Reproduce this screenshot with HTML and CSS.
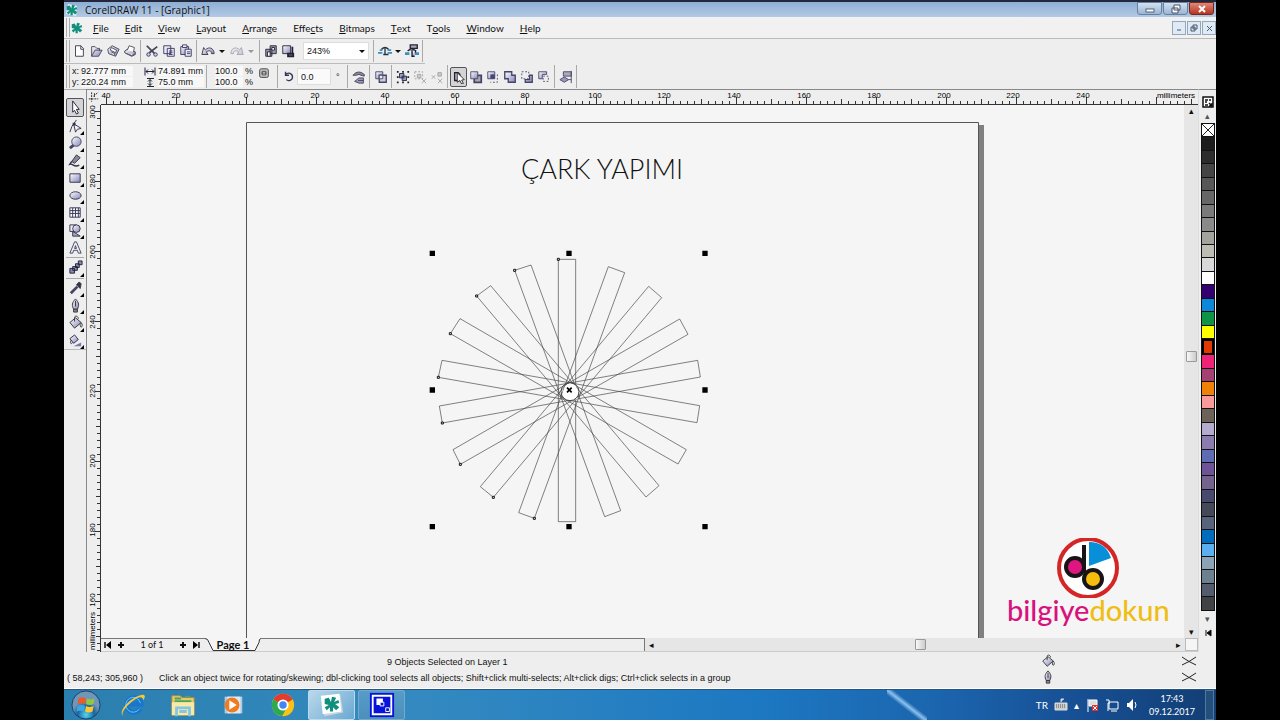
FILE: index.html
```
<!DOCTYPE html>
<html lang="en">
<head>
<meta charset="utf-8">
<title>CorelDRAW 11 - [Graphic1]</title>
<link rel="stylesheet" href="styles.css">
</head>
<body>
<svg class="defs" aria-hidden="true">
  <linearGradient id="lav" x1="0" y1="0" x2="1" y2="1"><stop offset="0" stop-color="#fff"/><stop offset="1" stop-color="#8585ba"/></linearGradient>
  <symbol id="corel" viewBox="0 0 16 16"><path d="M1 3l4-1 2 4 1-5 4 1-2 4 4-2 1 3-4 1 4 3-3 3-3-3v4H6v-4l-3 3-2-3 4-2-4-1z" fill="#108f7c"/></symbol>
  <symbol id="bucket" viewBox="0 0 16 16"><path d="M2 8l6-5 6 5-7 6z" fill="url(#lav)" stroke="#333"/><path d="M7 7V3c0-3 4-2 4 1M14 8c2 2 1 5 0 5s-1-3-1-4" fill="none" stroke="#333"/></symbol>
  <symbol id="pen" viewBox="0 0 16 16"><path d="M8 1c4 4 4 7 2 11H6C4 8 4 5 8 1z" fill="url(#lav)" stroke="#333"/><path d="M6 12h4v3H6zM8 3v6" fill="#888" stroke="#333"/></symbol>
  <symbol id="cross" viewBox="0 0 16 10"><path d="M1 1q7 5 14 8M15 1Q8 6 1 9" fill="none" stroke="#222"/></symbol>
</svg>
<div class="app">
  <header class="titlebar">
    <svg class="i14" viewBox="0 0 14 14"><path d="M3 1l9 2-1 10-10-2z" fill="#e8f3f4"/><svg x="1" y="1" width="12" height="12"><use href="#corel"/></svg></svg>
    <h1>CorelDRAW 11 - [Graphic1]</h1>
    <div class="winbtns">
      <button aria-label="Minimize"><svg viewBox="0 0 16 10"><rect x="4" y="5" width="8" height="3" fill="#fff" stroke="#56657d"/></svg></button>
      <button aria-label="Restore"><svg viewBox="0 0 16 10"><path d="M6 1h6v5h-6zM4 4h6v5H4z" fill="#fff" stroke="#44526b"/></svg></button>
      <button class="close" aria-label="Close"><svg viewBox="0 0 16 10"><path d="M5 2l6 6M11 2L5 8" stroke="#fff" stroke-width="2"/></svg></button>
    </div>
  </header>
  <nav class="menubar">
    <span class="grip"></span>
    <svg class="i12"><use href="#corel"/></svg>
    <div class="menus">
      <button><u>F</u>ile</button><button><u>E</u>dit</button><button><u>V</u>iew</button><button><u>L</u>ayout</button><button><u>A</u>rrange</button><button>Effe<u>c</u>ts</button><button><u>B</u>itmaps</button><button><u>T</u>ext</button><button>T<u>o</u>ols</button><button><u>W</u>indow</button><button><u>H</u>elp</button>
    </div>
    <div class="docbtns">
      <button aria-label="Minimize document"><svg viewBox="0 0 12 12"><path d="M4 8h4" stroke="#47576b"/></svg></button>
      <button aria-label="Restore document"><svg viewBox="0 0 12 12"><path d="M5 3h4v4H5zM3 5h4v4H3z" fill="#dce9f5" stroke="#47576b"/></svg></button>
      <button aria-label="Close document"><svg viewBox="0 0 12 12"><path d="M4 4l5 5M9 4L4 9" stroke="#47576b"/></svg></button>
    </div>
  </nav>
  <div class="toolbar">
    <div class="bar">
      <span class="grip"></span>
      <button aria-label="New"><svg viewBox="0 0 16 16"><path d="M4 2h6l3 3v9H4z" fill="#fff" stroke="#334"/><path d="M10 2v4h3" fill="none" stroke="#334"/></svg></button>
      <button aria-label="Open"><svg viewBox="0 0 16 16"><path d="M3 14V3h4l2 2h3v3M3 14l4-7h8l-4 7z" fill="url(#lav)" stroke="#445"/></svg></button>
      <button aria-label="Save"><svg viewBox="0 0 16 16"><path d="M2 6l5-4 8 4-4 8-8-3z" fill="url(#lav)" stroke="#445"/><path d="M6 4l6 3-1 3-6-3zM6 9l4 2-1 2" fill="#fff" stroke="#445"/></svg></button>
      <button aria-label="Print"><svg viewBox="0 0 16 16"><path d="M2 8l3-2 9 3v3l-4 2-8-4z" fill="url(#lav)" stroke="#334"/><path d="M5 7l2-5 6 2-1 5M4 11l6 2 3-2" fill="#fff" stroke="#445"/></svg></button>
      <span class="sep"></span>
      <button aria-label="Cut"><svg viewBox="0 0 16 16"><path d="M2 2l9 9M14 3L5 10" stroke="#445" stroke-width="2"/><circle cx="4" cy="12" r="2" fill="#ccd" stroke="#336"/><circle cx="12" cy="12" r="2" fill="#ccd" stroke="#336"/></svg></button>
      <button aria-label="Copy"><svg viewBox="0 0 16 16"><path d="M2 2h8v9H2zM6 5h8v9H6z" fill="#e8e8ff" stroke="#335"/><path d="M8 8h4M8 10h4M8 12h4" stroke="#335"/></svg></button>
      <button aria-label="Paste"><svg viewBox="0 0 16 16"><path d="M2 3h9v9H2z" fill="url(#lav)" stroke="#335"/><path d="M4 1h5v3H4zM7 6h7v8H7z" fill="#eef" stroke="#335"/><path d="M9 9h4M9 11h4" stroke="#335"/></svg></button>
      <span class="sep"></span>
      <button aria-label="Undo"><svg viewBox="0 0 16 16"><path d="M1 12l2-8 2 3c4-5 10-2 10 4h-3c0-4-3-4-6-2l2 3z" fill="url(#lav)" stroke="#334"/></svg></button>
      <button class="drop" aria-label="Undo list"></button>
      <button class="off" aria-label="Redo"><svg viewBox="0 0 16 16"><path d="M15 12l-2-8-2 3C7 2 1 5 1 11h3c0-4 3-4 6-2l-2 3z" fill="url(#lav)" stroke="#334"/></svg></button>
      <button class="drop off" aria-label="Redo list"></button>
      <span class="sep"></span>
      <button aria-label="Import"><svg viewBox="0 0 16 16"><path d="M7 2h7v9H7zM2 6h7v8H2z" fill="#99a" stroke="#223"/><path d="M9 4h3v3H9zM4 9h3v5H4z" fill="#fff" stroke="#223"/></svg></button>
      <button aria-label="Export"><svg viewBox="0 0 16 16"><path d="M2 2h9v9H2z" fill="url(#lav)" stroke="#223"/><path d="M8 11h6v3H8zM13 3v7" fill="#667" stroke="#223" stroke-width="2"/></svg></button>
      <label class="zoom"><select aria-label="Zoom level"><option>243%</option></select></label>
      <span class="sep"></span>
      <button aria-label="Launcher"><svg viewBox="0 0 16 16"><path d="M0 10h5M11 10h5M2 7h3M11 7h4" stroke="#3d8fc0" stroke-width="2"/><path d="M4 6q4-4 8 0M8 5v7h4M8 12H6" fill="none" stroke="#234" stroke-width="1.5"/></svg></button>
      <button class="drop small" aria-label="Launcher list"></button>
      <button aria-label="Community"><svg viewBox="0 0 16 16"><path d="M0 11h5M11 11h5" stroke="#3d8fc0" stroke-width="3"/><path d="M6 1h8v4H6zM3 8l4-3 6 3M8 7v7h3M12 7v3" fill="#aab" stroke="#223" stroke-width="1.5"/></svg></button>
      <span class="sep"></span>
    </div>
    <div class="bar prop">
      <span class="grip"></span>
      <div class="fields">
        <label>x: <input class="w52" value="92.777 mm"></label>
        <label>y: <input class="w52" value="220.24 mm"></label>
      </div>
      <div class="fields wide">
        <label><svg viewBox="0 0 12 8"><path d="M1 0v8M11 0v8M2 4h8M4 2L2 4l2 2M8 2l2 2-2 2" fill="none" stroke="#224"/></svg><input class="w46" aria-label="Width" value="74.891 mm"></label>
        <label><svg viewBox="0 0 12 8"><path d="M3 0h7M3 8h7M6 1v6M4 3l2-2 2 2M4 5l2 2 2-2" fill="none" stroke="#223"/></svg><input class="w46" aria-label="Height" value="75.0 mm"></label>
      </div>
      <span class="sep"></span>
      <div class="fields scale">
        <label><input class="w28" value="100.0"> %</label>
        <label><input class="w28" value="100.0"> %</label>
      </div>
      <button class="lock" aria-label="Keep proportions"><svg viewBox="0 0 16 16"><rect x="3" y="2" width="10" height="10" rx="2" fill="#bbb" stroke="#444"/><path d="M6 9V5h4v4zM5 7h6" fill="#eee" stroke="#444"/></svg></button>
      <span class="sep"></span>
      <button aria-label="Rotate"><svg viewBox="0 0 16 16"><path d="M4 5c3-3 8-1 8 3s-5 5-7 3M4 2v4h4" fill="none" stroke="#335" stroke-width="1.5"/></svg></button>
      <label class="angle"><input aria-label="Angle" value="0.0"> °</label>
      <span class="sep"></span>
      <button aria-label="Mirror"><svg viewBox="0 0 16 16"><path d="M1 6q6-7 13-1v2l-4-1-2-1-3 1z" fill="#889" stroke="#445"/><path d="M13 9v6H8l-5-2 5-4zM7 12h6" fill="#99b" stroke="#445"/></svg></button>
      <span class="sep"></span>
      <button aria-label="Wireframe"><svg viewBox="0 0 16 16"><path d="M2 2h8v8H2z" fill="url(#lav)" stroke="#446"/><path d="M6 6h8v8H6z" fill="#ccd" stroke="#446" stroke-width="1.5"/><path d="M6 6h4v4H6z" fill="#eee" stroke="#446"/></svg></button>
      <span class="sep"></span>
      <button aria-label="Group"><svg viewBox="0 0 16 16"><path d="M1 1h2v2H1zM7 1h2v2H7zM13 1h2v2h-2zM1 7h2v2H1zM13 7h2v2h-2zM1 13h2v2H1zM7 13h2v2H7zM13 13h2v2h-2z" fill="#222"/><path d="M4 4h5v5H4zM7 7h5v5H7z" fill="#99b" stroke="#224"/></svg></button>
      <button class="off" aria-label="Ungroup"><svg viewBox="0 0 16 16"><path d="M2 2h9v8H2z" fill="none" stroke="#222" stroke-dasharray="2 2"/><path d="M5 5h4v4H5zM10 10l5 5M15 10l-5 5" fill="#999" stroke="#333"/></svg></button>
      <button class="off" aria-label="Ungroup all"><svg viewBox="0 0 16 16"><path d="M9 3h4v4H9zM2 6l4 4M6 6l-4 4M9 10l5 5M14 10l-5 5" fill="#999" stroke="#333"/></svg></button>
      <span class="sep"></span>
      <button class="pressed" aria-label="Combine"><svg viewBox="0 0 16 16"><path d="M3 3h4l2 2v7H3z" fill="#bbd" stroke="#222" stroke-width="1.5"/><path d="M6 3l8 8-3 .5 2 4-2 .5-2-4-3 2z" fill="#fff" stroke="#222"/></svg></button>
      <button aria-label="Weld"><svg viewBox="0 0 16 16"><path d="M7 6h7v8H6v-4" fill="#aaa" stroke="#446" stroke-width="2"/><path d="M2 2h8v8H2z" fill="url(#lav)" stroke="#446"/></svg></button>
      <button aria-label="Intersect"><svg viewBox="0 0 16 16"><path d="M2 2h8v8H2z" fill="url(#lav)" stroke="#446"/><path d="M5 5h5v5H5z" fill="#447"/><path d="M13 5v9H5" fill="none" stroke="#446" stroke-dasharray="2 2"/></svg></button>
      <button aria-label="Simplify"><svg viewBox="0 0 16 16"><path d="M2 2h8v4h4v8H6v-4H2z" fill="url(#lav)" stroke="#446" stroke-width="1.5"/></svg></button>
      <button aria-label="Trim"><svg viewBox="0 0 16 16"><path d="M2 2h8v8H2z" fill="none" stroke="#446" stroke-dasharray="2 2"/><path d="M11 6h3v8H6v-3h5z" fill="url(#lav)" stroke="#446" stroke-width="1.5"/></svg></button>
      <button aria-label="Back minus front"><svg viewBox="0 0 16 16"><path d="M2 2h9v3H6v5H2z" fill="url(#lav)" stroke="#446"/><path d="M7 7h6v6H7z" fill="none" stroke="#446" stroke-dasharray="2 2"/></svg></button>
      <span class="sep"></span>
      <button aria-label="Align"><svg viewBox="0 0 16 16"><path d="M5 2h9v5H5z" fill="#aab" stroke="#446"/><path d="M1 11l5-3 5 3-5 3zM14 1v14M11 11h3" fill="#99b" stroke="#446"/></svg></button>
      <span class="sep"></span>
    </div>
  </div>

  <main class="main">
    <aside class="tools">
      <button class="pressed" aria-label="Pick"><svg viewBox="0 0 16 16"><path d="M5 1l7 9H9l2 4-2 1-2-4-2 2z" fill="#fff" stroke="#223"/></svg></button>
      <button class="fly" aria-label="Shape"><svg viewBox="0 0 16 16"><path d="M9 1Q3 8 2 14M6 5l2 9 2-3 4-1z" fill="#eef" stroke="#334"/><path d="M5 4h3v3H5z" fill="#335"/></svg></button>
      <button class="fly" aria-label="Zoom"><svg viewBox="0 0 16 16"><path d="M2 13l5-4" stroke="#446" stroke-width="3"/><circle cx="9" cy="6" r="5" fill="url(#lav)" stroke="#446"/></svg></button>
      <button class="fly" aria-label="Freehand"><svg viewBox="0 0 16 16"><path d="M4 9l5-7 4 3-6 6z" fill="#889" stroke="#334"/><path d="M4 9l-2 3c4-1 4 4 10 1" fill="none" stroke="#334" stroke-width="1.5"/></svg></button>
      <button class="fly" aria-label="Rectangle"><svg viewBox="0 0 16 16"><path d="M2 3h11v9H2z" fill="url(#lav)" stroke="#334"/></svg></button>
      <button class="fly" aria-label="Ellipse"><svg viewBox="0 0 16 16"><ellipse cx="8" cy="8" rx="6" ry="4" fill="url(#lav)" stroke="#334"/></svg></button>
      <button class="fly" aria-label="Graph paper"><svg viewBox="0 0 16 16"><path d="M2 3h11v10H2zM2 6h11M2 9h11M5 3v10M8 3v10M11 3v10" fill="#fff" stroke="#335"/></svg></button>
      <button class="fly" aria-label="Basic shapes"><svg viewBox="0 0 16 16"><path d="M2 2h7v7H2z" fill="#eef" stroke="#334"/><circle cx="9" cy="6" r="4" fill="url(#lav)" stroke="#334"/><path d="M5 14V9l8 5z" fill="#aac" stroke="#334"/></svg></button>
      <button aria-label="Text"><svg viewBox="0 0 16 16"><path d="M2 14L7 2h2l5 12h-3l-1-3H6l-1 3zM7 9h2L8 6z" fill="#eee" stroke="#446"/></svg></button>
      <hr>
      <button class="fly" aria-label="Blend"><svg viewBox="0 0 16 16"><path d="M2 9h5v5H2zM5 7h5v4H5zM8 4h4v4H8zM11 1h4v4h-4z" fill="#88b" stroke="#223"/></svg></button>
      <hr>
      <button class="fly" aria-label="Eyedropper"><svg viewBox="0 0 16 16"><path d="M3 13l7-7" stroke="#446" stroke-width="3"/><path d="M9 4l4 4 1-5-2-2z" fill="#334" stroke="#334"/></svg></button>
      <button class="fly" aria-label="Outline"><svg><use href="#pen"/></svg></button>
      <button class="fly" aria-label="Fill"><svg><use href="#bucket"/></svg></button>
      <button class="fly" aria-label="Interactive fill"><svg viewBox="0 0 16 16"><path d="M2 6l5-4 4 5-5 4z" fill="url(#lav)" stroke="#334"/><path d="M3 8c-1 4 1 4 2 2" fill="none" stroke="#334"/><path d="M6 14h8v-4z" fill="#77a"/></svg></button>
    </aside>

    <section class="work">
      <div class="corner"><svg viewBox="0 0 16 15"><path d="M6 2v10M3 9h10M8 6l5-4M9 3v4" fill="none" stroke="#222" stroke-dasharray="2 1"/></svg></div>
      <svg class="hruler">
        <defs><pattern id="ht" x="5" width="70" height="14" patternUnits="userSpaceOnUse"><path d="M.5 7v7M7.5 11v3M14.5 11v3M21.5 11v3M28.5 11v3M35.5 9v5M42.5 11v3M49.5 11v3M56.5 11v3M63.5 11v3" stroke="#333"/></pattern></defs>
        <rect width="100%" height="14" fill="url(#ht)"/>
        <g text-anchor="middle"><text x="5" y="8">40</text><text x="75" y="8">20</text><text x="145" y="8">0</text><text x="214" y="8">20</text><text x="284" y="8">40</text><text x="354" y="8">60</text><text x="424" y="8">80</text><text x="494" y="8">100</text><text x="563" y="8">120</text><text x="633" y="8">140</text><text x="703" y="8">160</text><text x="773" y="8">180</text><text x="843" y="8">200</text><text x="912" y="8">220</text><text x="982" y="8">240</text><text x="1075" y="8">millimeters</text></g>
      </svg>
      <svg class="vruler">
        <defs><pattern id="vt" y="6" width="14" height="70" patternUnits="userSpaceOnUse"><path d="M9 .5h5M11 7.5h3M11 14.5h3M11 21.5h3M11 28.5h3M10 35.5h4M11 42.5h3M11 49.5h3M11 56.5h3M11 63.5h3" stroke="#333"/></pattern></defs>
        <rect width="14" height="100%" fill="url(#vt)"/>
        <g text-anchor="middle"><text transform="translate(9 7) rotate(-90)">300</text><text transform="translate(9 76) rotate(-90)">280</text><text transform="translate(9 147) rotate(-90)">260</text><text transform="translate(9 217) rotate(-90)">240</text><text transform="translate(9 286) rotate(-90)">220</text><text transform="translate(9 356) rotate(-90)">200</text><text transform="translate(9 425) rotate(-90)">180</text><text transform="translate(9 495) rotate(-90)">160</text><text transform="translate(9 526) rotate(-90)">millimeters</text></g>
      </svg>
      <svg class="canvas" role="img" aria-label="Drawing page">
        <path d="M878 20h5v540h-5z" fill="#808080"/>
        <path d="M145.500 560V17.500h732V560" fill="none" stroke="#555"/>
        <text class="heading" x="420" y="74">ÇARK YAPIMI</text>
        <svg x="319" y="135" width="300" height="300" viewBox="0 0 900 900">
          <g fill="none" stroke="#444" stroke-width="2">
            <path d="M415 58h52v787h-52z"/><path d="M284 91l49-16 269 737-48 18z"/><path d="M170 168l42-31 505 600-39 34z"/><path d="M91 281l29-45 679 393-25 43z"/><path d="M55 412l11-51 773 136-8 51z"/><path d="M67 549l-9-51 775-137 8 50z"/><path d="M121 673l-22-44 680-392 25 46z"/><path d="M220 772l-39-32 505-601 39 34z"/><path d="M343 835l-47-17L565 80l49 18z"/>
          </g>
          <path d="M450 429l16 6 9 20-3 22-20 6-20-5-5-16 8-24z" fill="#fff"/><circle cx="450" cy="455" r="27" fill="none" stroke="#444" stroke-width="3"/>
          <path d="M441 443l14 14M455 443l-14 14" stroke="#000" stroke-width="5"/>
          <path d="M29 32h16v16H29zM439 32h16v16h-16zM847 32h16v16h-16zM29 442h16v16H29zM847 442h16v16h-16zM29 852h16v16H29zM439 852h16v16h-16zM847 852h16v16h-16z"/>
          <path d="M412 55h6v6h-6zM281 88h6v6h-6zM167 165h6v6h-6zM88 278h6v6h-6zM52 409h6v6h-6zM64 546h6v6h-6zM118 670h6v6h-6zM217 769h6v6h-6zM340 832h6v6h-6z" fill="#fff" stroke="#111" stroke-width="3"/>
        </svg>
        <svg x="956" y="433" width="62" height="60" viewBox="0 0 62 60">
          <circle cx="31" cy="30" r="29" fill="#fff" stroke="#d42626" stroke-width="4"/>
          <path d="M32 28V4q17 0 22 16z" fill="#078fd8"/>
          <path d="M27 7v28" stroke="#171317" stroke-width="4"/>
          <circle cx="18" cy="29" r="9" fill="#df1680" stroke="#171317" stroke-width="4"/><circle cx="36" cy="41" r="9" fill="#f5bd0c" stroke="#171317" stroke-width="4"/>
        </svg>
        <text class="brand" x="906" y="516"><tspan fill="#d8127d">bilgiye</tspan><tspan fill="#f0bd12">dokun</tspan></text>
      </svg>
      <div class="vscroll"><span>▴</span><i></i><span>▾</span></div>
      <div class="bottom">
        <div class="pages"><button aria-label="First page"><svg viewBox="0 0 8 8"><path d="M1 1v6" stroke="#111" stroke-width="1.5"/><path d="M7 0v8L2 4z"/></svg></button><button aria-label="Add page before"><svg viewBox="0 0 8 8"><path d="M4 1v6M1 4h6" stroke="#111" stroke-width="2"/></svg></button><span class="count">1 of 1</span><button aria-label="Add page after"><svg viewBox="0 0 8 8"><path d="M4 1v6M1 4h6" stroke="#111" stroke-width="2"/></svg></button><button aria-label="Last page"><svg viewBox="0 0 8 8"><path d="M7 1v6" stroke="#111" stroke-width="1.5"/><path d="M1 0v8l5-4z"/></svg></button></div>
        <button class="tab"><svg viewBox="0 0 56 13" preserveAspectRatio="none"><path d="M0 0q4 0 5 6l3 6h42l3-6q1-6 4-6z" fill="#f5f5f5" stroke="none"/><path d="M0 .5q3 0 4 4l4 8h42l4-8q0-4 2-4" fill="none" stroke="#333"/></svg><span>Page 1</span></button>
        <div class="rest"></div>
        <div class="hscroll"><span>◂</span><i></i><span>▸</span></div>
        <span class="nav"></span>
      </div>
    </section>

    <aside class="palette">
      <svg class="i12" viewBox="0 0 12 12"><path d="M1 1h10v10H1z" fill="#fff" stroke="#111" stroke-width="1.5"/><path d="M3 4h3M3 6h2M3 9h3M7 4h2M7 7l3 3M10 7v3H7" fill="none" stroke="#111" stroke-width="1.5"/></svg>
      <span class="arr">▴</span>
      <div class="swatches">
        <button aria-label="No color"><svg viewBox="0 0 12 12"><path d="M0 0h12v12H0z" fill="#fff"/><path d="M0 0l12 12M12 0L0 12" stroke="#222"/></svg></button><button style="background:#1c1c1c"></button><button style="background:#2c2c2c"></button><button style="background:#444"></button><button style="background:#575757"></button><button style="background:#666"></button><button style="background:#7a7a7a"></button><button style="background:#8a8a8a"></button><button style="background:#a3a39d"></button><button style="background:#bdbdb4"></button><button style="background:#d8d8d8"></button><button style="background:#fff"></button><button style="background:#32006f"></button><button style="background:#0b87dc"></button><button style="background:#0f9447"></button><button style="background:#ff0"></button><button class="sel" style="background:#e03a00"></button><button style="background:#ee2277"></button><button style="background:#a44072"></button><button style="background:#ee8208"></button><button style="background:#f99a9a"></button><button style="background:#6d6257"></button><button style="background:#b4aace"></button><button style="background:#8b7bae"></button><button style="background:#5f6bb3"></button><button style="background:#6f5399"></button><button style="background:#74628f"></button><button style="background:#47496f"></button><button style="background:#454856"></button><button style="background:#58647c"></button><button style="background:#006cbc"></button><button style="background:#5ab0ee"></button><button style="background:#8aa3b7"></button><button style="background:#6c8090"></button><button style="background:#525c6c"></button><button style="background:#404246"></button>
      </div>
      <span class="arr">▾</span>
      <svg class="first" viewBox="0 0 8 8"><path d="M2 1v6M7 1v6L3 4z" stroke="#111"/></svg>
    </aside>
  </main>

  <footer class="status">
    <div class="msgs">
      <p class="sel-info">9 Objects Selected on Layer 1</p>
      <p class="hint"><span class="coords">( 58,243; 305,960 )</span><span>Click an object twice for rotating/skewing; dbl-clicking tool selects all objects; Shift+click multi-selects; Alt+click digs; Ctrl+click selects in a group</span></p>
    </div>
    <div class="fills"><svg><use href="#bucket"/></svg><svg class="x"><use href="#cross"/></svg><svg><use href="#pen"/></svg><svg class="x"><use href="#cross"/></svg></div>
  </footer>

  <div class="taskbar">
    <button class="start" aria-label="Start"><svg viewBox="0 0 32 32"><defs><radialGradient id="orb" cy=".85"><stop offset="0" stop-color="#56d6ee"/><stop offset=".6" stop-color="#1a64a0"/><stop offset="1" stop-color="#7196b8"/></radialGradient></defs><circle cx="16" cy="16" r="15" fill="url(#orb)" stroke="#173d66"/><path d="M8 9q4-2 8 0l-1 6q-4-2-8 0z" fill="#ef5a24"/><path d="M17 9q4 2 8 0l-1 6q-4 2-8 0z" fill="#91c83e"/><path d="M7 17q4-2 8 0l-1 6q-4-2-8 0z" fill="#39a7e6"/><path d="M16 17q4 2 8 0l-1 6q-4 2-8 0z" fill="#fdc92e"/></svg></button>
    <button aria-label="Internet Explorer"><svg viewBox="0 0 28 28"><path d="M22 18a8 8 0 1 1 1-5H8" fill="none" stroke="#1676d0" stroke-width="5"/><path d="M21 18a8 8 0 1 1 1-6" fill="none" stroke="#61c8f7"/><path d="M3 26C-2 21 10 6 24 3c4 0 3 3 1 6 0-5-5-4-10 0C7 15 1 22 3 26z" fill="#f8c83c"/></svg></button>
    <button aria-label="Explorer"><svg viewBox="0 0 28 28"><path d="M2 4h9l2 2h13v19H2z" fill="#e9c96a" stroke="#a88a3d"/><path d="M5 7h7M16 5h6M5 10h18" stroke="#4aa464" stroke-width="2"/><path d="M2 11h24v14H2z" fill="#f9e9a2"/><path d="M7 26v-9h14v9M10 21h8" fill="none" stroke="#84c6e8" stroke-width="3"/></svg></button>
    <button aria-label="Media Player"><svg viewBox="0 0 28 28"><path d="M5 5h19v18H5z" fill="#adcbe1"/><path d="M8 5h14v18H8z" fill="#dfebf3"/><circle cx="13" cy="14" r="8" fill="#f07b20"/><path d="M10 9l8 5-8 5z" fill="#fff"/></svg></button>
    <button aria-label="Chrome"><svg viewBox="0 0 28 28"><circle cx="14" cy="14" r="12" fill="#fbc116"/><path d="M14 14L3.6 8A12 12 0 0 1 24.4 8z" fill="#e33b2e"/><path d="M14 14L3.6 8A12 12 0 0 0 13 26l5-9z" fill="#2da94f"/><circle cx="14" cy="14" r="6" fill="#fff"/><circle cx="14" cy="14" r="4" fill="#4285f4"/></svg></button>
    <button class="open" aria-label="CorelDRAW"><svg viewBox="0 0 28 28"><path d="M3 6l20-3 3 19-20 4z" fill="#c9d6dd"/><path d="M2 4l20-2 2 19-20 3z" fill="#fff"/><svg x="5" y="4" width="17" height="17"><use href="#corel"/></svg></svg></button>
    <button class="open dim" aria-label="Recorder"><svg viewBox="0 0 28 28"><path d="M1 1h26v26H1z" fill="#0713d9"/><path d="M4 4h20v20H4z" fill="none" stroke="#fff" stroke-width="2"/><path d="M8 7h7v7H8z" fill="#fff"/><path d="M12 11h4v4h-4zM18 17h4v4h-4z" fill="#0713d9" stroke="#fff"/></svg></button>
    <div class="tray">
      <span>TR</span>
      <svg viewBox="0 0 14 14"><path d="M7 4V1h3M1 5h12v7H1z" fill="#ccc" stroke="#ddd"/><path d="M2 7h10M2 9h10" stroke="#555" stroke-dasharray="1 1"/></svg>
      <span class="up">▴</span>
      <svg viewBox="0 0 14 14"><path d="M3 1v13M4 2h8v6H4z" fill="#ddd" stroke="#fff"/><path d="M7 7h6v6H7z" fill="#e03434"/><path d="M8 8l4 4M12 8l-4 4" stroke="#fff"/></svg>
      <svg viewBox="0 0 14 14"><path d="M4 4h9v7H4zM6 13h6M1 2h3v4M3 5v8" fill="none" stroke="#fff"/></svg>
      <svg viewBox="0 0 14 14"><path d="M2 5h2l4-4v12L4 9H2z" fill="#fff"/><path d="M10 4q2 3 0 6" fill="none" stroke="#fff"/></svg>
      <time>17:43<br>09.12.2017</time>
      <button class="desk" aria-label="Show desktop"></button>
    </div>
  </div>
</div>
</body>
</html>
```
FILE: styles.css
```
* { box-sizing: border-box; }
body { margin: 0; background: #000; font: 9px/12px "Lato", "Liberation Sans", sans-serif; color: #111; }
button, input, select { font: inherit; color: inherit; margin: 0; padding: 0; border: 0; background: none; }
button { display: flex; align-items: center; justify-content: center; }
h1, p { margin: 0; font-weight: 400; font-size: inherit; }
svg { display: block; flex: none; }
.defs { position: absolute; width: 0; height: 0; }
.i12 { width: 12px; height: 12px; }
.i14 { width: 14px; height: 14px; }
.app { display: flex; flex-direction: column; height: 100vh; margin: 0 64px; background: #eee; overflow: hidden; }

.titlebar { display: flex; align-items: center; gap: 6px; height: 17px; flex: none; padding: 0 2px 0 1px; border-top: 2px solid #23273c; background: linear-gradient(#8eaed4, #b3c9e4); font: 10px/14px "Open Sans", sans-serif; }
.titlebar h1 { flex: 1; }
.winbtns { display: flex; gap: 1px; align-self: flex-start; }
.winbtns button { width: 25px; height: 13px; border: 1px solid #66809f; border-radius: 0 0 3px 3px; background: linear-gradient(#d3e1f0, #9bb5d3); }
.winbtns svg { width: 16px; height: 10px; }
.winbtns .close { background: linear-gradient(#df8877, #b83420); border-color: #712a22; }

.menubar { display: flex; align-items: center; height: 22px; flex: none; padding-left: 2px; border-bottom: 1px solid #bbb; background: #f1f1f1; font-size: 10px; line-height: 14px; }
.menubar > svg { margin-left: 1px; }
.menus { display: flex; flex: 1; gap: 16px; margin-left: 10px; }
.docbtns { display: flex; gap: 1px; }
.docbtns button { width: 14px; height: 14px; border: 1px solid #94a8bc; background: #dfeaf4; }
.docbtns svg { width: 12px; height: 12px; }
.grip { align-self: stretch; width: 4px; margin: 1px 0; border-left: 1px solid #aaa; border-right: 1px solid #aaa; flex: none; }

.toolbar { flex: none; }
.bar { display: flex; align-items: center; height: 25px; padding-left: 2px; width: max-content; border-bottom: 1px solid #bbb; font-family: "Liberation Sans", sans-serif; }
.bar button { width: 17px; height: 20px; }
.bar svg { width: 14px; height: 14px; }
.bar .drop { width: 12px; }
.drop::after, .zoom::after { content: ""; border: 3px solid transparent; border-top-color: #111; border-bottom: 0; }
.bar .small { width: 10px; }
.off { opacity: .4; }
.sep { align-self: stretch; width: 1px; margin: 1px 2px; background: #aaa; flex: none; }
.zoom { display: flex; align-items: center; width: 66px; height: 18px; margin: 0 2px 0 7px; padding: 0 3px; background: #fff; border: 1px solid #ddd; }
.zoom select { flex: 1; appearance: none; outline: 0; }
.bar .pressed, .tools .pressed { border: 1px solid #555; border-radius: 2px; background: #d4d4d8; }
.prop { border: 0; }
.fields { display: flex; flex-direction: column; width: 64px; margin-left: 2px; line-height: 11px; }
.fields label { display: flex; gap: 2px; align-items: center; height: 11px; }
.fields label svg { width: 12px; height: 9px; }
.fields input { height: 10px; background: #f8f8f8; }
.fields.wide { width: 60px; margin-left: 8px; }
.fields.scale { width: 38px; margin-left: 6px; }
.w52 { width: 52px; }
.w46 { width: 46px; }
.w28 { width: 28px; }
.bar .lock { margin: 0 3px 0 2px; align-self: flex-start; }
.angle { display: flex; align-items: center; gap: 5px; width: 48px; }
.angle input { width: 34px; height: 17px; padding-left: 3px; border: 1px solid #ddd; background: #fafafa; }

.main { display: flex; flex: 1; min-height: 0; }
.tools { display: flex; flex-direction: column; width: 22px; height: 261px; flex: none; padding: 8px 0 0 2px; border-top: 1px solid #aaa; border-bottom: 1px solid #bbb; }
.tools button { position: relative; width: 18px; flex: 1; min-height: 0; }
.tools svg { width: 15px; height: 15px; }
.tools .fly::after { content: ""; position: absolute; right: 0; bottom: 0; border: 2px solid; border-color: transparent #000 #000 transparent; }
.tools hr { width: 18px; margin: 1px 0; border: 0; border-top: 1px solid #aaa; }
.work { flex: 1; min-width: 0; display: grid; grid-template: 15px 1fr 14px / 15px 1fr 14px; border-top: 1px solid #888; box-shadow: inset 1px 0 #888; }
.work text { font: 8px "Liberation Sans", sans-serif; }
.corner svg { width: 15px; height: 15px; }
.hruler { width: 100%; height: 15px; grid-column: 2 / 4; border-bottom: 1px solid #333; }
.vruler { width: 15px; height: 100%; grid-row: 2 / 4; grid-column: 1; border-right: 1px solid #333; }
.canvas { width: 100%; height: 100%; background: #f5f5f5; min-height: 0; overflow: hidden; }
.canvas .heading { font: 300 27px "Lato", sans-serif; fill: #111; }
.canvas .brand { font: 500 29px "Lato", sans-serif; }
.vscroll { display: flex; flex-direction: column; align-items: center; background: #e6e6e6; }
.vscroll i, .hscroll i { width: 11px; height: 11px; border: 1px solid #999; border-radius: 1px; background: linear-gradient(90deg, #f8f8f8, #ccc); }
.vscroll i { margin: auto 0; }
.vscroll span:last-child { flex-basis: 42px; display: flex; align-items: flex-end; }
.bottom { grid-column: 2 / 4; display: flex; border-bottom: 1px solid #ccc; }
.pages { display: flex; align-items: center; gap: 5px; width: 104px; padding: 0 5px 0 3px; border-top: 1px solid #777; }
.pages svg { width: 8px; height: 8px; }
.pages .count { flex: 1; text-align: center; }
.tab { position: relative; width: 56px; height: 13px; font-weight: 700; font-size: 11px; }
.tab svg { position: absolute; inset: 0; width: 56px; height: 13px; }
.tab span { position: relative; }
.rest { flex: 385; border-top: 1px solid #777; border-right: 1px solid #777; }
.hscroll { flex: 535; display: flex; align-items: center; padding: 0 4px; background: #e6e6e6; }
.hscroll i { margin-left: auto; }
.hscroll span:last-child { margin-left: 47%; }
.nav { width: 13px; border: 1px solid #bbb; background: #f5f5f5; }
.palette { width: 18px; flex: none; display: flex; flex-direction: column; align-items: center; padding: 6px 0 15px; border-top: 1px solid #888; border-left: 1px solid #ddd; }
.arr { height: 15px; color: #555; line-height: 15px; }
.swatches { flex: 1; min-height: 0; width: 14px; display: flex; flex-direction: column; border: 1px solid #111; }
.swatches button { flex: 1; min-height: 0; border-bottom: 1px solid #111; }
.swatches button:last-child { border-bottom: 0; }
.swatches .sel { border: 2px solid #000; }
.swatches svg { width: 12px; height: 12px; }
.first { width: 8px; height: 8px; margin-top: 3px; }

.status { display: flex; height: 37px; flex: none; border-bottom: 1px solid #fff; font-family: "Liberation Sans", sans-serif; }
.msgs { flex: 1; display: flex; flex-direction: column; gap: 4px; padding-top: 4px; }
.sel-info { padding-left: 323px; }
.hint { display: flex; padding-left: 3px; white-space: nowrap; }
.coords { width: 92px; }
.fills { display: grid; grid-template-columns: 1fr 16px; width: 156px; padding: 2px 0 0; align-items: center; align-content: start; margin-right: 19px; gap: 2px 0; }
.fills svg { width: 14px; height: 14px; }
.fills .x { width: 16px; height: 10px; }

.taskbar { display: flex; height: 31px; flex: none; align-items: center; border-top: 1px solid #28557d; background: linear-gradient(to top right, transparent 42%, #8cc0ee 50%, transparent 58%) 74% 0 / 40px 31px no-repeat, linear-gradient(90deg, #2b7fae, #348ac0 30%, #1d78c2 60%, #1b65ae 76%, #174f94 88%, #123e73); color: #fff; overflow: hidden; }
.taskbar > button { width: 50px; height: 30px; }
.taskbar > button svg { width: 26px; height: 26px; }
.taskbar > button svg svg { width: 18px; height: 18px; }
.taskbar > .start { width: 44px; }
.taskbar > .start svg { width: 30px; height: 30px; }
.taskbar > .open { width: 47px; margin-right: 3px; border: 1px solid #b9dbed; border-radius: 2px; background: linear-gradient(135deg, #b9d9eb, #6ba8d2); }
.taskbar > .dim { background: linear-gradient(#579bc8, #4b8fbd); border-color: #72a9cd; }
.tray { flex: 1; display: flex; align-items: center; justify-content: flex-end; gap: 6px; height: 100%; padding-right: 2px; }
.tray svg { width: 14px; height: 14px; }
.tray > span { font-size: 10px; }
.tray time { width: 54px; font-size: 9px; line-height: 13px; text-align: center; }
.desk { width: 9px; height: 30px; border: 1px solid #56789d; background: #234f7c; }
```
